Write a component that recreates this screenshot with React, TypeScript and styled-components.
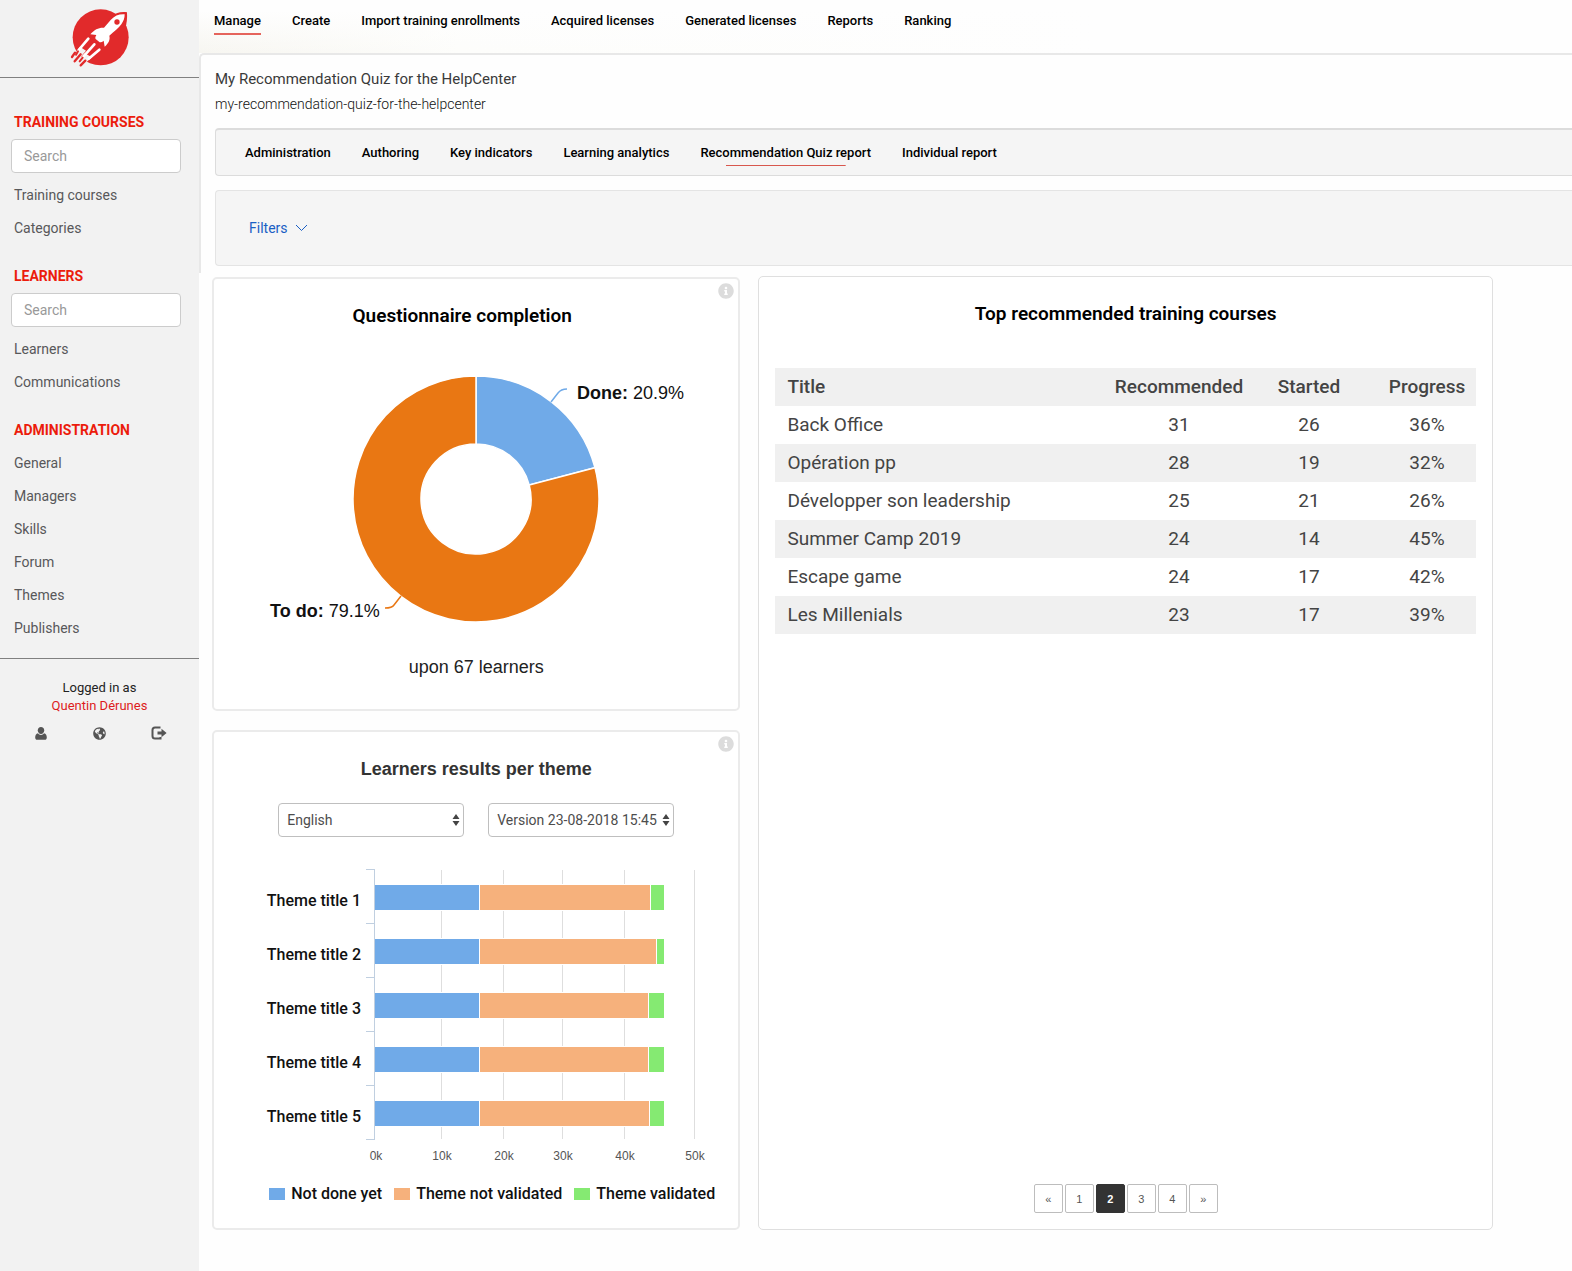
import React from "react";
import styled, { createGlobalStyle, css } from "styled-components";
import { FaInfoCircle, FaGlobeAmericas } from "react-icons/fa";

const GlobalStyle = createGlobalStyle`
  *, *::before, *::after { box-sizing: border-box; }
  body {
    margin: 0;
    background: #fefefe;
    color: #333;
    font-family: Roboto, "Liberation Sans", sans-serif;
    font-size: 14px;
    line-height: 20px;
  }
  a { color: inherit; text-decoration: none; }
  h1, h2, h3, p, ul { margin: 0; padding: 0; }
  ul { list-style: none; }
  button, input, select { font: inherit; color: inherit; margin: 0; }
`;

const ARIAL = '"Liberation Sans", Arial, sans-serif';
const BLUE = "#70aae8";
const ORANGE = "#e97713";
const PEACH = "#f6b17c";
const GREEN = "#85ea72";

const Page = styled.div`
  display: grid;
  grid-template-columns: 199px minmax(0, 1fr);
  min-height: 100vh;
`;

/* ---------- Sidebar ---------- */

const Sidebar = styled.aside`
  background: #f2f2f2;
`;

const Brand = styled.a`
  display: flex;
  justify-content: center;
  padding: 8px 0;
  height: 78px;
  border-bottom: 1px solid #808080;
`;

const SideNav = styled.nav`
  display: flex;
  flex-direction: column;
  gap: 21px;
  padding: 34px 18px 13px 11px;
`;

const SideHeading = styled.h2`
  padding-left: 3px;
  margin-bottom: 7px;
  font-size: 14px;
  line-height: 20px;
  font-weight: 700;
  color: #ec1c0c;
  text-transform: uppercase;
`;

const SearchInput = styled.input`
  display: block;
  width: 100%;
  height: 34px;
  margin-bottom: 6px;
  padding: 0 12px;
  border: 1px solid #ccc;
  border-radius: 4px;
  background: #fff;
  &::placeholder { color: #999; opacity: 1; }
`;

const SideLink = styled.a`
  display: block;
  padding-left: 3px;
  line-height: 33px;
  color: #58585a;
`;

const Account = styled.div`
  border-top: 1px solid #808080;
  padding: 20px 11px 0;
  font-size: 13px;
  line-height: 18px;
  text-align: center;
  color: #222;
`;

const UserName = styled.a`
  display: block;
  color: #dd1c1c;
`;

const AccountActions = styled.div`
  display: grid;
  grid-template-columns: repeat(3, 1fr);
  margin-top: 10px;
`;

const IconButton = styled.button`
  display: flex;
  justify-content: center;
  align-items: center;
  height: 16px;
  padding: 0;
  border: 0;
  background: none;
  color: #555;
  cursor: pointer;
`;

/* ---------- Main ---------- */

const Main = styled.main`
  background: #fefefe;
`;

const TopNav = styled.nav`
  display: flex;
  gap: 31px;
  height: 53px;
  padding: 11px 15px 0;
  font-size: 13px;
  font-weight: 500;
  color: #000;
  background: linear-gradient(180deg, #fefefe 20%, transparent 100%),
    linear-gradient(90deg, #f7f6f1 0, #fdfdfb 260px, #fefefe 900px);
`;

const TopLink = styled.a<{ $active?: boolean }>`
  align-self: flex-start;
  padding-bottom: 2px;
  border-bottom: 2px solid ${(p) => (p.$active ? "#e5645c" : "transparent")};
`;

const CourseHead = styled.section`
  padding: 12px 0 7px 14px;
  border: 2px solid #e8e8e8;
  border-width: 2px 0 0 2px;
  border-top-left-radius: 5px;
`;

const CourseTitle = styled.h1`
  font-size: 15px;
  line-height: 24px;
  font-weight: 400;
  color: #3a3a3a;
`;

const CourseSlug = styled.p`
  margin: 3px 0 14px;
  font-weight: 300;
  color: #111;
`;

const barFrame = css`
  background: #f5f5f5;
  border-style: solid;
  border-radius: 4px 0 0 4px;
`;

const TabBar = styled.nav`
  ${barFrame}
  display: flex;
  align-items: center;
  gap: 31px;
  height: 48px;
  margin-bottom: 14px;
  padding: 0 29px;
  border-color: #dcdcdc;
  border-width: 2px 0 1px 1px;
  font-size: 13px;
  font-weight: 500;
  color: #000;
`;

const TabLink = styled.a<{ $active?: boolean }>`
  padding: 3px 0;
  ${(p) =>
    p.$active &&
    css`
      background: linear-gradient(#d8574e, #d8574e) center bottom / 70% 1px no-repeat;
    `}
`;

const FilterBar = styled.div`
  ${barFrame}
  display: flex;
  align-items: center;
  height: 76px;
  padding: 0 33px;
  border-color: #e4e4e4;
  border-width: 1px 0 1px 1px;
`;

const FilterButton = styled.button`
  display: flex;
  align-items: center;
  gap: 7px;
  padding: 0;
  border: 0;
  background: none;
  color: #1a5fc4;
  cursor: pointer;
`;

const Dashboard = styled.div`
  display: grid;
  grid-template-columns: minmax(460px, 528fr) minmax(520px, 734fr);
  gap: 18px;
  padding: 3px 79px 42px 13px;
`;

const Column = styled.div`
  display: flex;
  flex-direction: column;
  gap: 19px;
  padding-top: 1px;
`;

const Card = styled.section<{ $thin?: boolean }>`
  position: relative;
  display: flex;
  flex-direction: column;
  padding: 25px 16px 16px;
  border: ${(p) => (p.$thin ? "1px solid #dfdfdf" : "2px solid #ebebeb")};
  border-radius: 5px;
  background: #fff;
`;

const CardTitle = styled.h3<{ $gap: number; $shift?: boolean; $plain?: boolean }>`
  margin-bottom: ${(p) => p.$gap}px;
  padding-right: ${(p) => (p.$shift ? 28 : 0)}px;
  font-family: ${(p) => (p.$plain ? ARIAL : "inherit")};
  font-size: ${(p) => (p.$plain ? 18 : 19)}px;
  line-height: 24px;
  font-weight: ${(p) => (p.$plain ? 700 : 600)};
  text-align: center;
  color: ${(p) => (p.$plain ? "#333" : "#000")};
`;

const InfoButton = styled.button`
  position: absolute;
  top: 4px;
  right: 4px;
  display: flex;
  padding: 0;
  border: 0;
  background: none;
  color: #dcdcdc;
  cursor: pointer;
`;

const Drawing = styled.svg`
  display: block;
  margin: 0 auto;
  flex: none;
`;

const DonutLabel = styled.text`
  font-family: ${ARIAL};
  font-size: 18px;
  fill: #111;
`;

const Caption = styled.p`
  margin: 25px 0 14px;
  font-family: ${ARIAL};
  font-size: 18px;
  line-height: 24px;
  text-align: center;
  color: #222;
`;

const SelectRow = styled.div`
  display: flex;
  justify-content: center;
  gap: 24px;
  margin-bottom: 28px;
`;

const SelectBox = styled.div`
  display: grid;
  grid-template-columns: 186px;
  align-items: center;
  & > * { grid-area: 1 / 1; }
  & > svg { justify-self: end; margin-right: 4px; pointer-events: none; }
`;

const Select = styled.select`
  appearance: none;
  width: 100%;
  height: 34px;
  padding: 0 16px 0 8px;
  border: 1px solid #bfbfbf;
  border-radius: 4px;
  background: #fff;
  color: #4d4d4d;
`;

const ChartArea = styled.div`
  display: flex;
  flex-direction: column;
  align-items: center;
  padding: 0 0 8px 32px;
`;

const ThemeLabel = styled.text`
  font-size: 16px;
  font-weight: 500;
  fill: #111;
`;

const TickLabel = styled.text`
  font-family: ${ARIAL};
  font-size: 12px;
  fill: #555;
`;

const Legend = styled.ul`
  display: flex;
  gap: 12px;
  margin-top: 19px;
  font-size: 16px;
  font-weight: 500;
  color: #111;
  white-space: nowrap;
`;

const LegendItem = styled.li<{ $color: string }>`
  display: flex;
  align-items: center;
  gap: 6px;
  &::before {
    content: "";
    width: 16px;
    height: 12px;
    background: ${(p) => p.$color};
  }
`;

const Table = styled.table`
  width: 100%;
  border-collapse: collapse;
  font-size: 19px;
  line-height: 38px;
  color: #444;
  tr:nth-child(even), thead tr { background: #f0f0f0; }
`;

const Cell = styled.td<{ $align?: "left" | "last" }>`
  padding: 0 0 0 ${(p) => (p.$align === "left" ? 12 : p.$align === "last" ? 10 : 0)}px;
  text-align: ${(p) => (p.$align === "left" ? "left" : "center")};
  font-weight: 400;
`;

const HeadCell = styled(Cell)<{ $width?: number }>`
  width: ${(p) => (p.$width ? `${p.$width}px` : "auto")};
  font-weight: 500;
`;

const Pagination = styled.nav`
  display: flex;
  justify-content: center;
  gap: 2px;
  margin-top: auto;
`;

const PageButton = styled.button<{ $active?: boolean }>`
  width: 29px;
  height: 29px;
  padding: 0;
  border: 1px solid ${(p) => (p.$active ? "#333" : "#bdbdbd")};
  border-radius: 2px;
  background: ${(p) => (p.$active ? "#333" : "#fff")};
  color: ${(p) => (p.$active ? "#fff" : "#555")};
  font-family: ${ARIAL};
  font-size: 11px;
  font-weight: ${(p) => (p.$active ? 700 : 400)};
  cursor: pointer;
`;

/* ---------- Drawings ---------- */

const RocketLogo = () => (
  <svg width="60" height="60" viewBox="30 24 180 180" aria-hidden="true">
    <circle cx="122" cy="112" r="84" fill="#e12a2b" />
    <path d="M201 37C184 34 166 38 150 52L128 76 176 118C194 98 203 74 201 37Z" fill="#e12a2b" />
    <path
      d="M194 43C177 42 164 47 152 60L132 83C116 82 104 88 91 103L109 105C106 110 105 114 107 117L119 127C123 127 128 125 131 122L134 140C146 129 151 119 148 107C163 94 176 84 184 73C191 63 194 54 194 43Z"
      fill="#fff"
    />
    <circle cx="171" cy="66" r="8" fill="#e12a2b" />
    <path d="M32 176L60 140L78 152L56 178Z M50 186L74 160L96 172L62 202Z" fill="#f2f2f2" />
    <g strokeLinecap="round" fill="none">
      <path d="M85 116L56 150M103 133L68 172M118 149L86 176" stroke="#fff" strokeWidth="8" />
      <path d="M45 158L36 171M62 163L44 184M76 182L62 196" stroke="#e12a2b" strokeWidth="7" />
      <path d="M54 154L48 164M68 173L59 184" stroke="#e12a2b" strokeWidth="6" />
    </g>
  </svg>
);

const UserIcon = () => (
  <svg width="12" height="13" viewBox="0 0 12 13" fill="currentColor" aria-hidden="true">
    <path d="M6 0C8 0 9.2 1.4 9.2 3.3 9.2 5.2 8 7 6 7S2.800 5.200 2.800 3.300C2.800 1.400 4 0 6 0Z" />
    <path d="M3 6.200C3.700 7.300 4.800 7.900 6 7.900S8.300 7.300 9 6.200C11 6.600 11.800 8.300 11.800 10.500 11.800 12 11 12.800 9.800 12.800H2.200C1 12.800.2 12 .2 10.500.2 8.300 1 6.600 3 6.200Z" />
  </svg>
);

const LogoutIcon = () => (
  <svg width="16" height="14" viewBox="0 0 16 14" aria-hidden="true">
    <path d="M9.500 1.500H4Q1.500 1.500 1.500 4V10Q1.500 12.500 4 12.500H9.500V11" fill="none" stroke="currentColor" strokeWidth="2" />
    <path d="M6.500 5.400H10.500V2.800L15.600 7L10.500 11.200V8.600H6.500Z" fill="currentColor" />
  </svg>
);

const ChevronIcon = () => (
  <svg width="13" height="8" viewBox="0 0 13 8" fill="none" stroke="currentColor" aria-hidden="true">
    <path d="M1 1L6.500 6.500L12 1" />
  </svg>
);

const SortArrows = () => (
  <svg width="8" height="14" viewBox="0 0 8 14" fill="#444" aria-hidden="true">
    <path d="M4 1L7.500 6H.5ZM4 13L.5 8H7.500Z" />
  </svg>
);

const Donut = ({ done }: { done: number }) => {
  const cx = 210;
  const cy = 129;
  const outer = 123;
  const inner = 55;
  const angle = done * 2 * Math.PI;
  const at = (r: number, a: number) => `${cx + r * Math.sin(a)} ${cy - r * Math.cos(a)}`;
  const ring = (from: number, to: number) => {
    const large = to - from > Math.PI ? 1 : 0;
    return `M${at(outer, from)}A${outer} ${outer} 0 ${large} 1 ${at(outer, to)}L${at(inner, to)}A${inner} ${inner} 0 ${large} 0 ${at(inner, from)}Z`;
  };
  return (
    <Drawing width="420" height="260" viewBox="0 0 420 260" role="img" aria-label="Questionnaire completion">
      <g stroke="#fff" strokeWidth="1.500">
        <path d={ring(0, angle)} fill={BLUE} />
        <path d={ring(angle, 2 * Math.PI)} fill={ORANGE} />
      </g>
      <path d="M285 32L292 23Q295 19 301 19" fill="none" stroke={BLUE} strokeWidth="1.500" />
      <path d="M135 226L128 235Q126 238 119 238" fill="none" stroke={ORANGE} strokeWidth="1.500" />
      <DonutLabel x="311" y="29">
        <tspan fontWeight="700">Done:</tspan> 20.9%
      </DonutLabel>
      <DonutLabel x="4" y="247">
        <tspan fontWeight="700">To do:</tspan> 79.1%
      </DonutLabel>
    </Drawing>
  );
};

const themes = [
  { name: "Theme title 1", ends: [213, 384, 398] },
  { name: "Theme title 2", ends: [213, 390, 398] },
  { name: "Theme title 3", ends: [213, 382, 398] },
  { name: "Theme title 4", ends: [213, 382, 398] },
  { name: "Theme title 5", ends: [213, 383, 398] },
];

const ticks = [
  { label: "0k", x: 109 },
  { label: "10k", x: 175 },
  { label: "20k", x: 237 },
  { label: "30k", x: 296 },
  { label: "40k", x: 358 },
  { label: "50k", x: 428 },
];

const ThemeChart = () => (
  <Drawing width="452" height="300" viewBox="0 0 452 300" role="img" aria-label="Learners results per theme">
    <g shapeRendering="crispEdges">
      {ticks.slice(1).map((t) => (
        <rect key={t.label} x={t.x} y="5" width="1" height="269" fill="#dedede" />
      ))}
      <path d="M99.500 4.500H108.500V274.500H99.500M99.500 58.500H108M99.500 112.500H108M99.500 166.500H108M99.500 220.500H108" fill="none" stroke="#c0cfe0" />
      {themes.map((t, i) => (
        <g key={t.name}>
          <rect x="109" y={19 + i * 54} width="290" height="27" fill="#fff" />
          <rect x="109" y={20 + i * 54} width={t.ends[0] - 109} height="25" fill={BLUE} />
          <rect x={t.ends[0] + 1} y={20 + i * 54} width={t.ends[1] - t.ends[0] - 1} height="25" fill={PEACH} />
          <rect x={t.ends[1] + 1} y={20 + i * 54} width={t.ends[2] - t.ends[1] - 1} height="25" fill={GREEN} />
        </g>
      ))}
    </g>
    {themes.map((t, i) => (
      <ThemeLabel key={t.name} x="95" y={41 + i * 54} textAnchor="end">
        {t.name}
      </ThemeLabel>
    ))}
    {ticks.map((t) => (
      <TickLabel key={t.label} x={t.x + 1} y="295" textAnchor="middle">
        {t.label}
      </TickLabel>
    ))}
  </Drawing>
);

/* ---------- Data ---------- */

const sections = [
  { title: "Training courses", search: true, links: ["Training courses", "Categories"] },
  { title: "Learners", search: true, links: ["Learners", "Communications"] },
  {
    title: "Administration",
    search: false,
    links: ["General", "Managers", "Skills", "Forum", "Themes", "Publishers"],
  },
];

const topLinks = [
  "Manage",
  "Create",
  "Import training enrollments",
  "Acquired licenses",
  "Generated licenses",
  "Reports",
  "Ranking",
];

const tabs = [
  "Administration",
  "Authoring",
  "Key indicators",
  "Learning analytics",
  "Recommendation Quiz report",
  "Individual report",
];

const courses: [string, number, number, string][] = [
  ["Back Office", 31, 26, "36%"],
  ["Opération pp", 28, 19, "32%"],
  ["Développer son leadership", 25, 21, "26%"],
  ["Summer Camp 2019", 24, 14, "45%"],
  ["Escape game", 24, 17, "42%"],
  ["Les Millenials", 23, 17, "39%"],
];

const Info = () => (
  <InfoButton type="button" aria-label="More information">
    <FaInfoCircle size={16} />
  </InfoButton>
);

export default function App() {
  return (
    <>
      <GlobalStyle />
      <Page>
        <Sidebar>
          <Brand href="#" aria-label="Home">
            <RocketLogo />
          </Brand>
          <SideNav>
            {sections.map((s) => (
              <div key={s.title}>
                <SideHeading>{s.title}</SideHeading>
                {s.search && <SearchInput type="text" placeholder="Search" aria-label={`Search ${s.title}`} />}
                {s.links.map((l) => (
                  <SideLink key={l} href="#">
                    {l}
                  </SideLink>
                ))}
              </div>
            ))}
          </SideNav>
          <Account>
            Logged in as
            <UserName href="#">Quentin Dérunes</UserName>
            <AccountActions>
              <IconButton type="button" aria-label="Profile">
                <UserIcon />
              </IconButton>
              <IconButton type="button" aria-label="Language">
                <FaGlobeAmericas size={13} />
              </IconButton>
              <IconButton type="button" aria-label="Log out">
                <LogoutIcon />
              </IconButton>
            </AccountActions>
          </Account>
        </Sidebar>

        <Main>
          <TopNav>
            {topLinks.map((l, i) => (
              <TopLink key={l} href="#" $active={i === 0}>
                {l}
              </TopLink>
            ))}
          </TopNav>

          <CourseHead>
            <CourseTitle>My Recommendation Quiz for the HelpCenter</CourseTitle>
            <CourseSlug>my-recommendation-quiz-for-the-helpcenter</CourseSlug>
            <TabBar>
              {tabs.map((t) => (
                <TabLink key={t} href="#" $active={t === "Recommendation Quiz report"}>
                  {t}
                </TabLink>
              ))}
            </TabBar>
            <FilterBar>
              <FilterButton type="button">
                Filters
                <ChevronIcon />
              </FilterButton>
            </FilterBar>
          </CourseHead>

          <Dashboard>
            <Column>
              <Card>
                <Info />
                <CardTitle $gap={42} $shift>
                  Questionnaire completion
                </CardTitle>
                <Donut done={0.209} />
                <Caption>upon 67 learners</Caption>
              </Card>

              <Card>
                <Info />
                <CardTitle $gap={22} $plain>
                  Learners results per theme
                </CardTitle>
                <SelectRow>
                  <SelectBox>
                    <Select aria-label="Language" defaultValue="English">
                      <option>English</option>
                    </Select>
                    <SortArrows />
                  </SelectBox>
                  <SelectBox>
                    <Select aria-label="Version" defaultValue="Version 23-08-2018 15:45">
                      <option>Version 23-08-2018 15:45</option>
                    </Select>
                    <SortArrows />
                  </SelectBox>
                </SelectRow>
                <ChartArea>
                  <ThemeChart />
                  <Legend>
                    <LegendItem $color={BLUE}>Not done yet</LegendItem>
                    <LegendItem $color={PEACH}>Theme not validated</LegendItem>
                    <LegendItem $color={GREEN}>Theme validated</LegendItem>
                  </Legend>
                </ChartArea>
              </Card>
            </Column>

            <Card $thin>
              <CardTitle $gap={42}>Top recommended training courses</CardTitle>
              <Table>
                <thead>
                  <tr>
                    <HeadCell as="th" scope="col" $align="left">Title</HeadCell>
                    <HeadCell as="th" scope="col" $width={142}>Recommended</HeadCell>
                    <HeadCell as="th" scope="col" $width={118}>Started</HeadCell>
                    <HeadCell as="th" scope="col" $width={108} $align="last">Progress</HeadCell>
                  </tr>
                </thead>
                <tbody>
                  {courses.map(([title, recommended, started, progress]) => (
                    <tr key={title}>
                      <Cell $align="left">{title}</Cell>
                      <Cell>{recommended}</Cell>
                      <Cell>{started}</Cell>
                      <Cell $align="last">{progress}</Cell>
                    </tr>
                  ))}
                </tbody>
              </Table>
              <Pagination aria-label="Pages">
                {["«", "1", "2", "3", "4", "»"].map((p) => (
                  <PageButton key={p} type="button" $active={p === "2"}>
                    {p}
                  </PageButton>
                ))}
              </Pagination>
            </Card>
          </Dashboard>
        </Main>
      </Page>
    </>
  );
}
